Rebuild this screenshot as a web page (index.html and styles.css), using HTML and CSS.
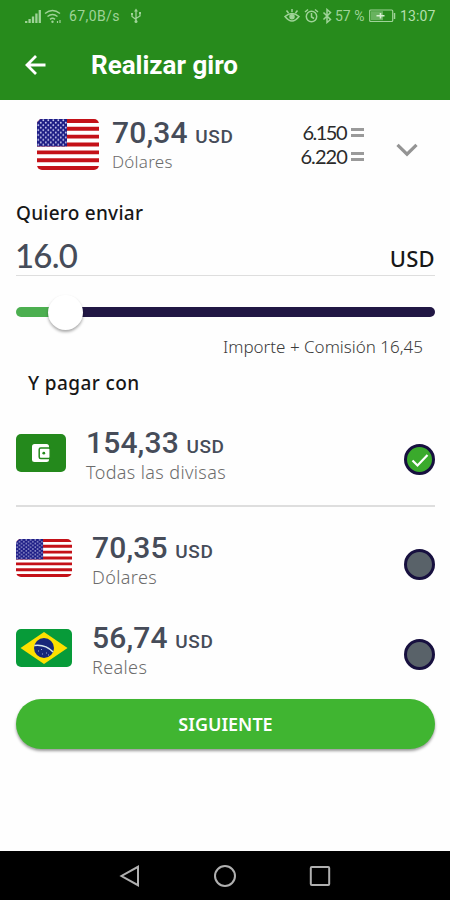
FILE: index.html
```html
<!DOCTYPE html>
<html lang="es">
<head>
<meta charset="utf-8">
<title>Realizar giro</title>
<link rel="stylesheet" href="styles.css">
</head>
<body>
<svg class="defs" width="0" height="0" aria-hidden="true">
  <defs>
    <pattern id="stars" width="5" height="5" patternUnits="userSpaceOnUse">
      <rect width="5" height="5" fill="#1c1c85"/>
      <circle cx="1.3" cy="1.3" r=".95" fill="#c9c9ee"/>
      <circle cx="3.8" cy="3.8" r=".95" fill="#c9c9ee"/>
    </pattern>
    <symbol id="flag-us" viewBox="0 0 62 52" preserveAspectRatio="none">
      <rect width="62" height="52" fill="#fff"/>
      <path d="M0 2h62M0 10h62M0 18h62M0 26h62M0 34h62M0 42h62M0 50h62" stroke="#c41118" stroke-width="4"/>
      <rect width="30" height="28" fill="url(#stars)"/>
    </symbol>
  </defs>
</svg>
<header class="top">
  <div class="status">
    <svg class="status-left" width="40" height="16" viewBox="0 0 40 16">
      <path d="M1.2 13v2M4.6 11v4M8 8.500v6.500M11.400 5.500v9.500M14.800 2v13" stroke="currentColor" stroke-width="2.300"/>
      <path d="M20 5.500q7.500-6 15 0M22.500 8.500q5-4 10 0M25 11.300q2.500-2 5 0" fill="none" stroke="currentColor" stroke-width="1.500"/>
      <circle cx="27.500" cy="13.700" r="1.200" fill="currentColor"/>
      <path d="M32.500 13v2M35 12v3" stroke="currentColor" stroke-width="1.200"/>
    </svg>
    <span class="speed">67,0B/s</span>
    <svg class="usb" width="12" height="16" viewBox="0 0 12 16" fill="none" stroke="currentColor" stroke-width="1.300">
      <path d="M6 13V2M2 6v2.500l4 3M10 5v3l-4 2.500"/><path d="M6 .5L8 3.500H4zM1 5h2v2H1zM9 4h2v2H9z" fill="currentColor" stroke="none"/><circle cx="6" cy="13.500" r="1.500" fill="currentColor" stroke="none"/>
    </svg>
    <svg class="status-right" width="50" height="16" viewBox="0 0 50 16" fill="none" stroke="currentColor" stroke-width="1.500">
      <path d="M1 8.500q7-6 14 0q-7 9-14 0zM2.500 2.500l2 2.500M8 1v3M13.500 2.500l-2 2.500"/><circle cx="8" cy="8.800" r="2" fill="currentColor"/>
      <circle cx="27.500" cy="8.500" r="5.200"/><path d="M27.500 5v4l2.500 1.500M21 4l3-2.500M34 4l-3-2.500"/>
      <path d="M39.500 4.500l7 7L43 14.500V1.500l3.500 3-7 7"/>
    </svg>
    <span class="percent">57 %</span>
    <svg class="battery" width="27" height="14" viewBox="0 0 27 14">
      <rect x=".7" y="1" width="23" height="11.500" rx="1" fill="none" stroke="currentColor" stroke-width="1.200"/>
      <path d="M2 2.200h12v9H2z" fill="currentColor" opacity=".55"/><path d="M25.500 4v6" stroke="currentColor" stroke-width="1.500"/>
      <path d="M7.500 6.700h8M11.500 4v5.500" stroke="#d8f0d4" stroke-width="1.600"/>
    </svg>
    <span class="clock">13:07</span>
  </div>
  <div class="appbar">
    <svg width="22" height="22" viewBox="0 0 22 22" fill="none" stroke="#fff" stroke-width="2.800"><path d="M20.500 11H2.500M11 2L2 11l9 9"/></svg>
    <h1>Realizar giro</h1>
  </div>
</header>
<main>
  <section class="currency">
    <svg class="flag-lg" width="62" height="51"><use href="#flag-us" width="62" height="51"/></svg>
    <div class="info">
      <div class="amount">70,34 <small>USD</small></div>
      <div class="name">Dólares</div>
    </div>
    <div class="rates">
      <div>6.150<i class="equal"></i></div>
      <div>6.220<i class="equal"></i></div>
    </div>
    <svg class="chevron" width="22" height="14" viewBox="0 0 22 14" fill="none" stroke="#949494" stroke-width="3.200"><path d="M1.500 1.800L11 11.200l9.500-9.400"/></svg>
  </section>
  <label class="send-label">Quiero enviar</label>
  <div class="field"><span class="value">16.0</span><span class="unit">USD</span></div>
  <div class="slider"><div class="fill"></div><div class="thumb"></div><div class="track"></div></div>
  <p class="total">Importe + Comisión 16,45</p>
  <h2>Y pagar con</h2>
  <div class="option wallet">
    <div class="icon">
      <div class="wallet-tile"><svg width="20" height="20" viewBox="0 0 20 20"><rect x="1" y="1" width="17" height="18" rx="2.500" fill="#fff"/><rect x="8.200" y="5" width="11" height="10.500" rx="1.500" fill="#fff" stroke="#24891c" stroke-width="1.500"/><circle cx="12.800" cy="10.200" r="1.400" fill="#24891c"/></svg></div>
    </div>
    <div class="info"><div class="amount">154,33 <small>USD</small></div><div class="name">Todas las divisas</div></div>
    <div class="radio checked"><svg width="20" height="20" viewBox="0 0 20 20" fill="none" stroke="#fff" stroke-width="2.200"><path d="M2.500 10.500l5 5L17.500 5"/></svg></div>
  </div>
  <div class="option">
    <div class="icon"><svg class="flag" width="56" height="38"><use href="#flag-us" width="56" height="38"/></svg></div>
    <div class="info"><div class="amount">70,35 <small>USD</small></div><div class="name">Dólares</div></div>
    <div class="radio"></div>
  </div>
  <div class="option">
    <div class="icon"><svg class="flag" width="56" height="38" viewBox="0 0 56 38"><rect width="56" height="38" fill="#079b39"/><path d="M28 3l23.500 16L28 35 4.500 19z" fill="#fee000"/><circle cx="28" cy="19" r="10" fill="#17277a"/><path d="M18.300 16.500q11-1.500 18.800 6.500" fill="none" stroke="#d5e7ed" stroke-width="1.700"/><path d="M22 22h1M26 25h1M30 24h1M25 20.500h1M32 26h1" stroke="#9faed5"/></svg></div>
    <div class="info"><div class="amount">56,74 <small>USD</small></div><div class="name">Reales</div></div>
    <div class="radio"></div>
  </div>
  <button class="next">SIGUIENTE</button>
</main>
<nav>
  <svg width="22" height="24" viewBox="0 0 22 24"><path d="M19 2.800v18.400L2.500 12z"/></svg>
  <svg width="24" height="24" viewBox="0 0 24 24"><circle cx="12" cy="12" r="10"/></svg>
  <svg width="22" height="24" viewBox="0 0 22 24"><rect x="1.800" y="3" width="18.400" height="18" rx="1"/></svg>
</nav>
</body>
</html>
```
FILE: styles.css
```css
* { box-sizing: border-box; }
body { margin: 0; width: 450px; height: 900px; overflow: hidden; display: flex; flex-direction: column; background: #fefefe; font-family: "Noto Sans", sans-serif; color: #171717; }
.defs { display: block; flex: none; }
.top { height: 100px; background: #278b1c; flex: none; }
.status { height: 32px; display: flex; align-items: center; padding: 0 14px 0 25px; color: #9fd398; font: 14px/32px Roboto, sans-serif; white-space: nowrap; }
.speed { margin-left: 4px; width: 51px; letter-spacing: .4px; }
.usb { margin-left: 10px; }
.status-right { margin-left: auto; }
.percent { margin-left: 1px; width: 30px; }
.battery { margin-left: 4px; }
.clock { margin-left: 4px; width: 36px; color: #b4dfae; letter-spacing: .15px; }
.appbar { height: 68px; display: flex; align-items: center; padding: 0 25px 2px; }
h1 { margin: 0 0 0 44px; color: #fff; font: 700 26px/30px Roboto, sans-serif; }
main { flex: 1; padding: 0 15px 0 16px; display: flex; flex-direction: column; }
.currency { height: 100px; flex: none; display: flex; padding-left: 21px; }
.flag-lg { margin-top: 19px; border-radius: 5px; flex: none; }
.info { margin-left: 13px; white-space: nowrap; }
.currency .info { padding-top: 17px; width: 140px; }
.amount { font: 500 30px/32px Roboto, sans-serif; color: #464c59; letter-spacing: .15px; }
.amount small { font-size: 19px; letter-spacing: .6px; }
.name { margin-top: -5px; font-size: 18px; line-height: 28px; font-weight: 300; color: #6c6c6c; letter-spacing: .38px; }
.currency .name { margin-top: -4px; font-size: 17px; line-height: 25px; letter-spacing: .25px; }
.rates { width: 112px; padding-top: 20px; font: 20px/24px Lato, sans-serif; letter-spacing: -.9px; color: #2b2b2b; display: flex; flex-direction: column; align-items: flex-end; }
.rates div { display: flex; align-items: center; gap: 4px; }
.rates div:first-child { letter-spacing: -1.5px; gap: 5px; }
.equal { width: 13px; height: 9px; border-top: 3px solid #9a9a9a; border-bottom: 3px solid #9a9a9a; }
.chevron { margin: 43px 0 0 32px; flex: none; }
.send-label { height: 30px; flex: none; font-size: 19px; line-height: 26px; font-weight: 500; letter-spacing: .25px; }
.field { height: 46px; flex: none; display: flex; justify-content: space-between; border-bottom: 1px solid #dedede; }
.value { margin-left: -1px; font: 500 33px/51px Lato, sans-serif; color: #464c59; letter-spacing: -.8px; }
.unit { font-size: 22px; line-height: 56px; font-weight: 500; letter-spacing: .3px; }
.slider { height: 36px; margin-top: 18px; display: flex; align-items: center; flex: none; }
.fill { width: 34px; height: 10px; background: #4caf50; border-radius: 5px 0 0 5px; }
.thumb { width: 35px; height: 35px; margin: 0 -2px; border-radius: 50%; background: #fff; box-shadow: 0 2px 3px #0005; z-index: 1; }
.track { flex: 1; height: 10px; background: #211744; border-radius: 0 5px 5px 0; }
.total { margin: 5px 12px 0 0; text-align: right; font-size: 17px; line-height: 24px; font-weight: 300; color: #3b3b3b; white-space: nowrap; }
h2 { margin: 12px 0 0 12px; height: 48px; flex: none; font-size: 19px; line-height: 24px; font-weight: 500; letter-spacing: .4px; }
.option { height: 90px; display: flex; padding-top: 15px; flex: none; }
.option .icon { width: 56px; padding-top: 7px; }
.option .info { margin-left: 20px; flex: 1; }
.flag { border-radius: 5px; display: block; }
.radio { width: 31px; height: 31px; margin-top: 17px; border: 3px solid #17103f; border-radius: 50%; background: #596269; display: flex; align-items: center; justify-content: center; }
.radio.checked { background: #3aaa2c; }
.wallet { height: 88px; border-bottom: 2px solid #dedede; padding-top: 8px; margin-bottom: 10px; }
.wallet .icon { width: 50px; }
.wallet-tile { width: 50px; height: 38px; border-radius: 5px; background: #24891c; display: flex; align-items: center; justify-content: center; }
.next { margin-top: 2px; height: 50px; flex: none; border: 0; border-radius: 25px; background: #40b531; color: #fff; padding: 0; font: 600 18px/48px "Noto Sans", sans-serif; box-shadow: 0 2px 3px #0006; }
nav { height: 49px; flex: none; background: #000; display: flex; justify-content: center; align-items: center; gap: 72px; }
nav svg { fill: none; stroke: #b0b0b0; stroke-width: 2; }
```
